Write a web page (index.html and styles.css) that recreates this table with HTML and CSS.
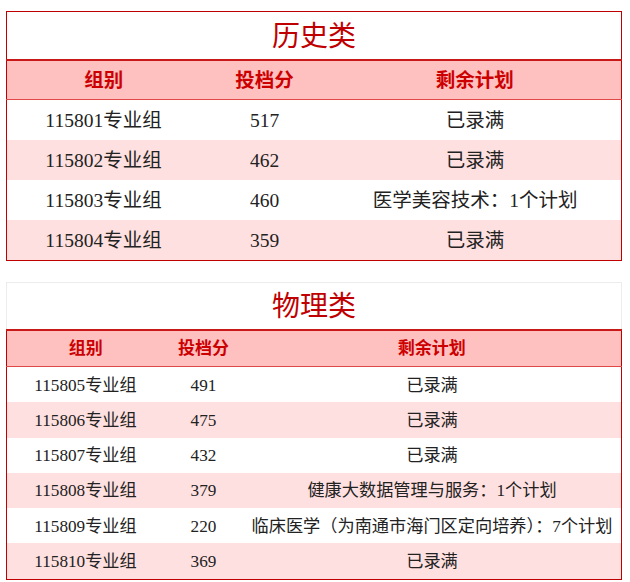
FILE: index.html
```html
<!DOCTYPE html>
<html lang="zh-CN">
<head>
<meta charset="utf-8">
<title>投档分</title>
<link rel="stylesheet" href="styles.css">
</head>
<body>
<div class="page">
  <table class="score t1">
    <colgroup><col class="c1"><col class="c2"><col class="c3"></colgroup>
    <tr class="title"><th colspan="3">历史类</th></tr>
    <tr class="head"><th>组别</th><th>投档分</th><th>剩余计划</th></tr>
    <tr><td>115801专业组</td><td>517</td><td>已录满</td></tr>
    <tr class="alt"><td>115802专业组</td><td>462</td><td>已录满</td></tr>
    <tr><td>115803专业组</td><td>460</td><td>医学美容技术：1个计划</td></tr>
    <tr class="alt last"><td>115804专业组</td><td>359</td><td>已录满</td></tr>
  </table>

  <table class="score t2">
    <colgroup><col class="c1"><col class="c2"><col class="c3"></colgroup>
    <tr class="title"><th colspan="3">物理类</th></tr>
    <tr class="head"><th>组别</th><th>投档分</th><th>剩余计划</th></tr>
    <tr><td>115805专业组</td><td>491</td><td>已录满</td></tr>
    <tr class="alt"><td>115806专业组</td><td>475</td><td>已录满</td></tr>
    <tr><td>115807专业组</td><td>432</td><td>已录满</td></tr>
    <tr class="alt"><td>115808专业组</td><td>379</td><td>健康大数据管理与服务：1个计划</td></tr>
    <tr><td>115809专业组</td><td>220</td><td>临床医学（为南通市海门区定向培养）：7个计划</td></tr>
    <tr class="alt last"><td>115810专业组</td><td>369</td><td>已录满</td></tr>
  </table>
</div>
</body>
</html>
```

FILE: styles.css
```css
html, body {
  margin: 0;
  padding: 0;
  background: #ffffff;
}

.page {
  padding: 11px 0 0 6px;
  display: flex;
  flex-direction: column;
  gap: 21px;
  font-family: "Liberation Serif", "Noto Sans CJK SC", serif;
}

.score {
  border-collapse: collapse;
  table-layout: fixed;
  width: 615px;
}

.score th,
.score td {
  padding: 0;
  text-align: center;
  vertical-align: middle;
  white-space: nowrap;
  line-height: 1;
}

.score td {
  color: #222222;
  border-left: 1px solid transparent;
  border-right: 1px solid transparent;
}

.score tr > td:first-child { border-left: 1px solid #c00000; }
.score tr > td:last-child { border-right: 1px solid #c00000; }

.score .last td { border-bottom: 1px solid #c00000; }

.score .alt td { background: #ffe0e0; }

.title th {
  font-weight: normal;
  color: #c00000;
  font-size: 28px;
  background: #ffffff;
}

.head th {
  background: #ffc0c0;
  color: #cc0000;
  font-weight: bold;
  border-top: 2px solid #c81818;
  border-bottom: 1px solid #e04848;
}

.head th:first-child { border-left: 1px solid #c00000; }
.head th:last-child { border-right: 1px solid #c00000; }

/* 历史类 */
.t1 .c1 { width: 194px; }
.t1 .c2 { width: 128px; }
.t1 .c3 { width: 293px; }

.t1 .title th {
  height: 44px;
  padding-top: 3px;
  border: 1px solid #c00000;
  border-bottom: none;
}

.t1 .head th {
  height: 37px;
  padding-top: 1px;
  font-size: 19.5px;
}

.t1 td {
  height: 38px;
  padding-top: 2px;
  font-size: 19.5px;
}

/* 物理类 */
.t2 .c1 { width: 158px; }
.t2 .c2 { width: 78px; }
.t2 .c3 { width: 379px; }

.t2 .title th {
  height: 44px;
  padding-top: 2px;
  border: 1px solid #ececec;
  border-bottom: none;
}

.t2 .head th {
  height: 35px;
  font-size: 17px;
}

.t2 td {
  height: 34.3px;
  padding-top: 1px;
  font-size: 17.2px;
}
```
